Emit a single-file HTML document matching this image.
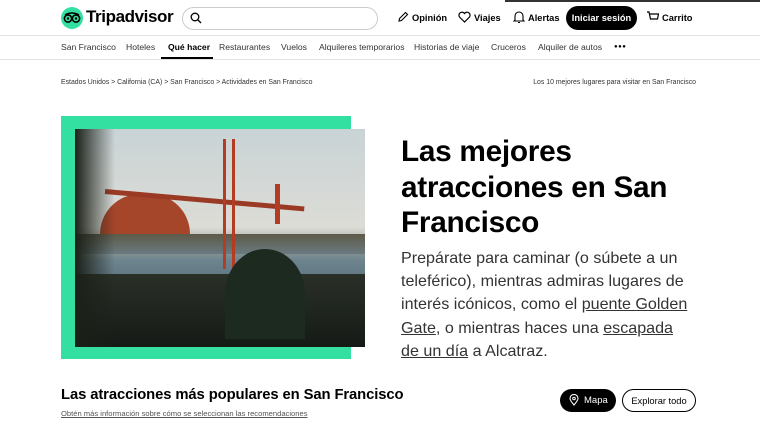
<!DOCTYPE html>
<html><head><meta charset="utf-8"><style>
*{margin:0;padding:0;box-sizing:border-box}
body{width:760px;height:432px;overflow:hidden;background:#fff;font-family:"Liberation Sans",sans-serif;color:#000;position:relative}
.a{position:absolute;white-space:nowrap}
.nav a{position:absolute;top:42px;font-size:8.6px;color:#333}
.h{font-size:9.3px;font-weight:bold;top:13px}
</style></head><body>
<div class="a" style="left:505px;top:0;width:255px;height:2px;background:#333"></div>
<div class="a" style="left:61px;top:7px;width:22px;height:22px;border-radius:50%;background:#34e0a1"></div>
<svg class="a" style="left:63px;top:12px" width="18" height="12" viewBox="0 0 18 12"><circle cx="5" cy="6.5" r="3.6" fill="none" stroke="#000" stroke-width="1.6"/><circle cx="13" cy="6.5" r="3.6" fill="none" stroke="#000" stroke-width="1.6"/><circle cx="5" cy="6.5" r="1.2"/><circle cx="13" cy="6.5" r="1.2"/><path d="M2 3 Q9 -1 16 3" fill="none" stroke="#000" stroke-width="1.4"/></svg>
<div class="a" style="left:86px;top:7px;font-size:17px;font-weight:bold;letter-spacing:-0.4px">Tripadvisor</div>
<div class="a" style="left:182px;top:7px;width:196px;height:23px;border:1px solid #ccc;border-radius:12px"></div>
<svg class="a" style="left:190px;top:12px" width="12" height="12" viewBox="0 0 12 12"><circle cx="5" cy="5" r="3.8" fill="none" stroke="#000" stroke-width="1.3"/><path d="M8 8l3 3" stroke="#000" stroke-width="1.3"/></svg>
<svg class="a" style="left:397px;top:11px" width="12" height="12" viewBox="0 0 12 12"><path d="M2 10l.5-2.5L8.5 1.5l2 2L4.5 9.5z" fill="none" stroke="#000" stroke-width="1.1"/></svg>
<div class="a h" style="left:412px">Opinión</div>
<svg class="a" style="left:458px;top:11px" width="13" height="12" viewBox="0 0 13 12"><path d="M6.5 11L1.5 6A3 3 0 0 1 6.5 2.5A3 3 0 0 1 11.5 6z" fill="none" stroke="#000" stroke-width="1.2"/></svg>
<div class="a h" style="left:474px">Viajes</div>
<svg class="a" style="left:513px;top:10px" width="12" height="14" viewBox="0 0 12 14"><path d="M2 10V6a4 4 0 0 1 8 0v4l1 1H1z M5 12.5h2" fill="none" stroke="#000" stroke-width="1.1"/></svg>
<div class="a h" style="left:528px">Alertas</div>
<div class="a" style="left:566px;top:6px;width:71px;height:24px;background:#000;border-radius:12px;color:#fff;font-size:9.3px;font-weight:bold;text-align:center;line-height:24px">Iniciar sesión</div>
<svg class="a" style="left:646px;top:11px" width="13" height="12" viewBox="0 0 13 12"><path d="M1 1h2l1.5 7h7l1-5H4M5 11h.1M10 11h.1" fill="none" stroke="#000" stroke-width="1.2"/></svg>
<div class="a h" style="left:662px">Carrito</div>
<div class="a" style="left:0;top:35px;width:760px;height:1px;background:#e3e3e3"></div>
<div class="nav">
<a style="left:61px">San Francisco</a><a style="left:126px">Hoteles</a><a style="left:168px;color:#000;font-weight:bold">Qué hacer</a><a style="left:219px">Restaurantes</a><a style="left:281px">Vuelos</a><a style="left:319px">Alquileres temporarios</a><a style="left:414px">Historias de viaje</a><a style="left:491px">Cruceros</a><a style="left:538px">Alquiler de autos</a><a style="left:614px;font-weight:bold;color:#000;font-size:6px;top:44px;letter-spacing:0.5px">●●●</a>
</div>
<div class="a" style="left:161px;top:57px;width:52px;height:2px;background:#000"></div>
<div class="a" style="left:0;top:59px;width:760px;height:1px;background:#e3e3e3"></div>
<div class="a" style="left:61px;top:79px;font-size:6.9px;color:#333">Estados Unidos &gt; California (CA) &gt; San Francisco &gt; Actividades en San Francisco</div>
<div class="a" style="right:64px;top:79px;font-size:6.9px;color:#333">Los 10 mejores lugares para visitar en San Francisco</div>
<div class="a" style="left:61px;top:116px;width:290px;height:243px;background:#34e0a1"></div>
<div class="a" style="left:75px;top:129px;width:290px;height:218px;overflow:hidden;background:linear-gradient(#c9d3d6 0%,#dcdcd6 45%,#8f9a8f 55%,#6e8590 60%,#4c6470 80%,#364a52 100%)">
<div class="a" style="left:0;top:105px;width:290px;height:20px;background:linear-gradient(#5d5a48,#6a7a80)"></div>
<div class="a" style="left:25px;top:65px;width:90px;height:40px;background:#a5452a;border-radius:40px 40px 0 0"></div>
<div class="a" style="left:30px;top:60px;width:200px;height:5px;background:#9b3a24;transform:rotate(5deg);transform-origin:left"></div>
<div class="a" style="left:148px;top:10px;width:12px;height:130px;border-left:3px solid #b43c22;border-right:3px solid #b43c22"></div>
<div class="a" style="left:200px;top:55px;width:5px;height:40px;background:#b43c22"></div>
<div class="a" style="left:0;top:145px;width:290px;height:73px;background:linear-gradient(#2a3028,#151a16)"></div>
<div class="a" style="left:0;top:0;width:40px;height:218px;background:linear-gradient(90deg,#1b2018,rgba(27,32,24,0))"></div>
<div class="a" style="left:150px;top:120px;width:80px;height:90px;background:#1c2a20;border-radius:50% 50% 0 0"></div>
</div>
<div class="a" style="left:401px;top:134px;font-size:29.8px;font-weight:bold;line-height:35.5px;letter-spacing:-0.3px">Las mejores<br>atracciones en San<br>Francisco</div>
<div class="a" style="left:401px;top:247px;font-size:16.1px;line-height:23.2px;color:#333">Prepárate para caminar (o súbete a un<br>teleférico), mientras admiras lugares de<br>interés icónicos, como el <u>puente Golden</u><br><u>Gate</u>, o mientras haces una <u>escapada</u><br><u>de un día</u> a Alcatraz.</div>
<div class="a" style="left:61px;top:387px;font-size:14.8px;font-weight:bold;letter-spacing:-0.1px">Las atracciones más populares en San Francisco</div>
<div class="a" style="left:61px;top:409px;font-size:7.6px;color:#555;text-decoration:underline">Obtén más información sobre cómo se seleccionan las recomendaciones</div>
<div class="a" style="left:560px;top:389px;width:56px;height:23px;background:#000;border-radius:12px"></div>
<svg class="a" style="left:569px;top:394px" width="10" height="12" viewBox="0 0 10 12"><path d="M5 11C2 7.5 1 6 1 4.5a4 4 0 0 1 8 0C9 6 8 7.5 5 11z" fill="none" stroke="#fff" stroke-width="1.1"/><circle cx="5" cy="4.5" r="1.3" fill="none" stroke="#fff"/></svg>
<div class="a" style="left:584px;top:395px;font-size:9.5px;color:#fff">Mapa</div>
<div class="a" style="left:622px;top:389px;width:74px;height:23px;border:1.5px solid #000;border-radius:12px;font-size:9.3px;display:flex;align-items:center;justify-content:center">Explorar todo</div>
</body></html>
